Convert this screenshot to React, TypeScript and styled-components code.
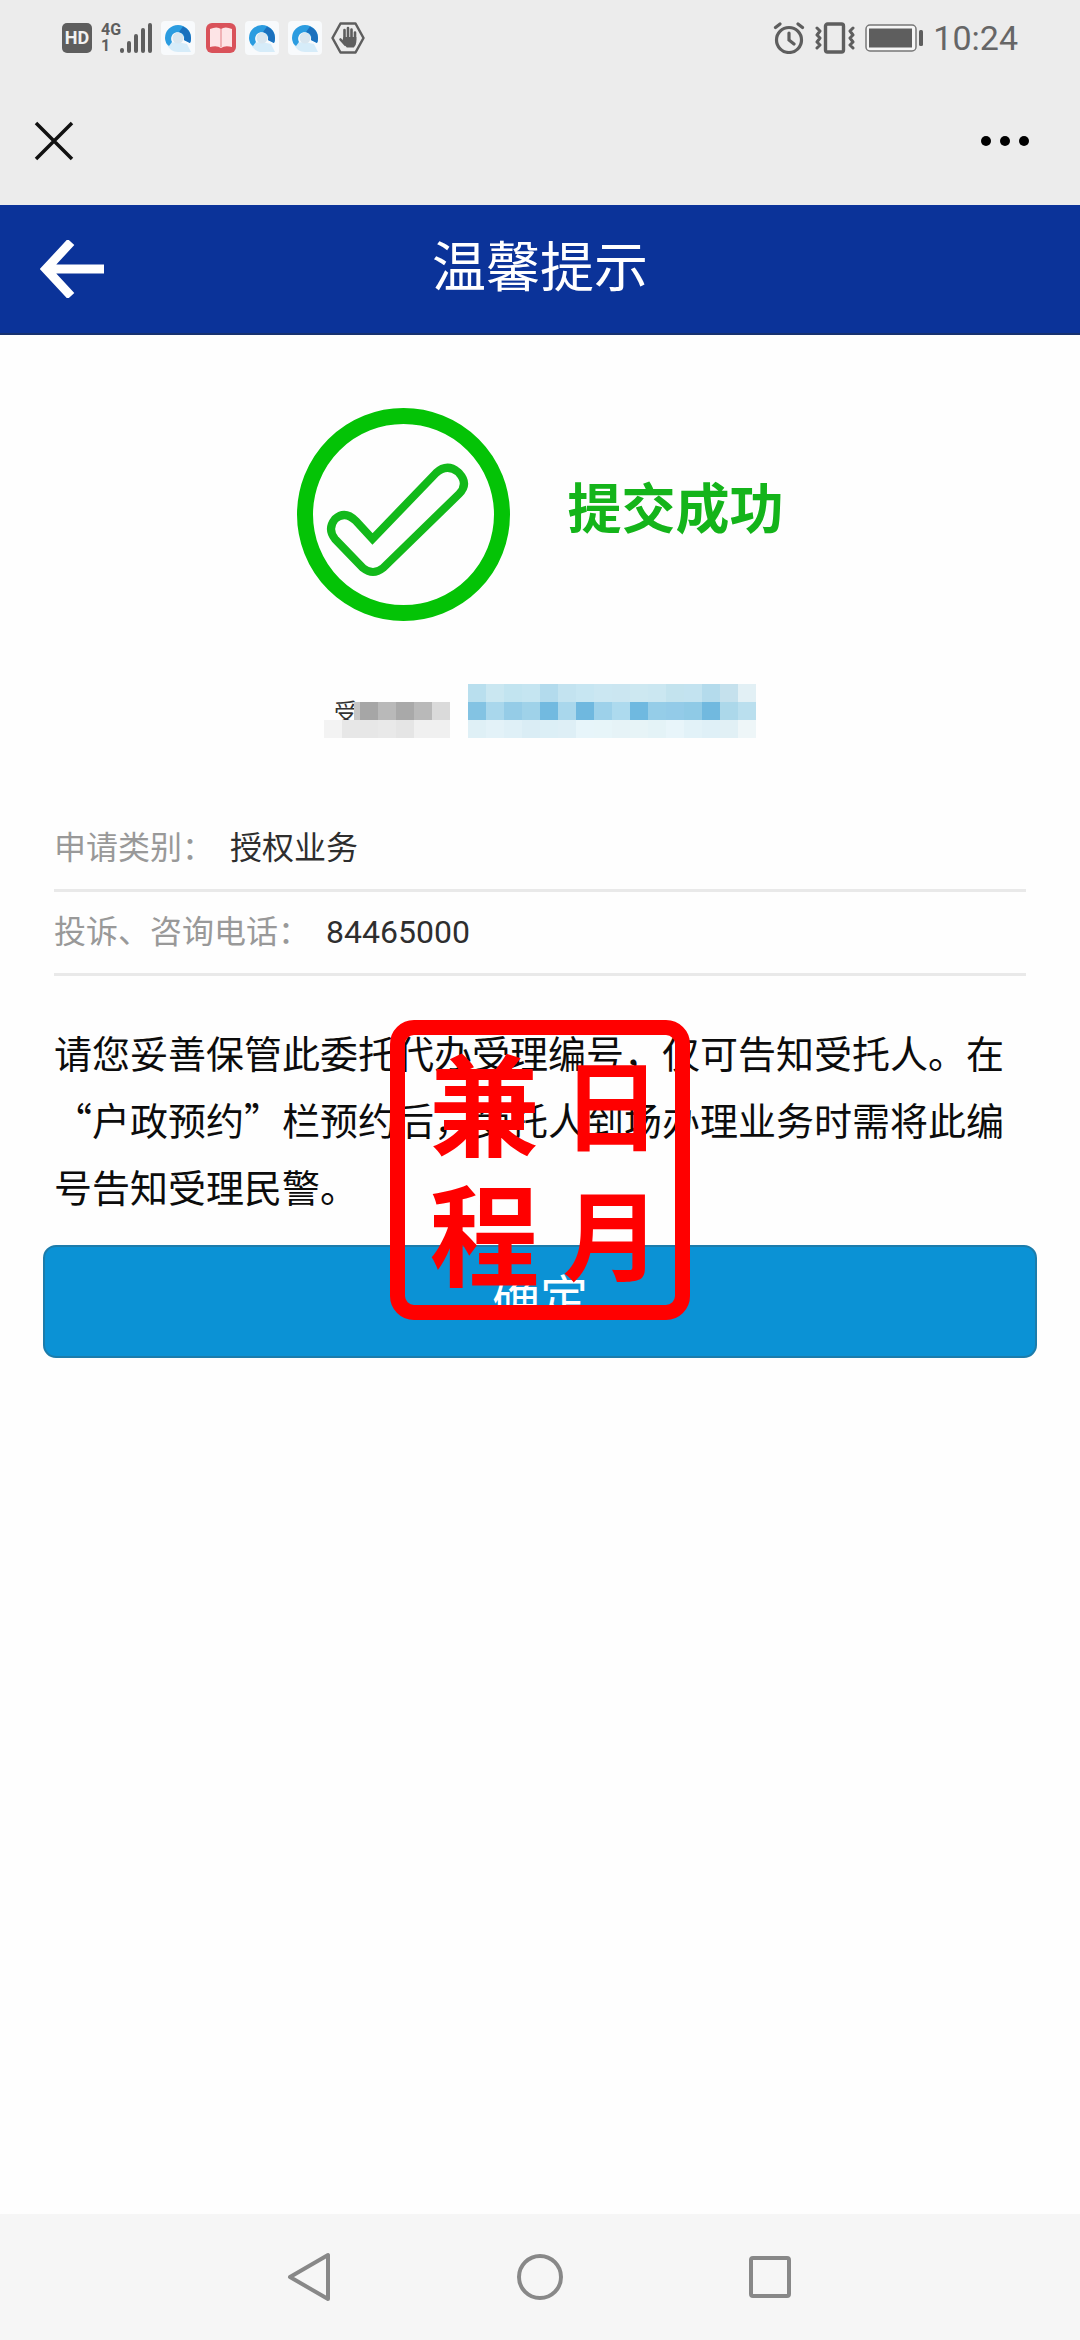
import React from "react";
import styled, { createGlobalStyle } from "styled-components";

const GlobalStyle = createGlobalStyle`
  * { box-sizing: border-box; }
  body {
    margin: 0;
    background: #fefefe;
    font-family: Roboto, "Noto Sans CJK SC", sans-serif;
    color: #333;
  }
  button { font: inherit; border: 0; padding: 0; background: none; cursor: pointer; }
  svg { display: block; flex: none; }
`;

const Screen = styled.div`
  display: flex;
  flex-direction: column;
  min-height: 100vh;
`;

const StatusBar = styled.header`
  display: flex;
  justify-content: space-between;
  align-items: center;
  height: 76px;
  padding: 0 62px;
  background: #ececec;
  color: #666;
`;

const StatusGroup = styled.div<{ $gap: number }>`
  display: flex;
  align-items: center;
  gap: ${(p) => p.$gap}px;
`;

const HdBadge = styled.span`
  width: 30px;
  height: 30px;
  border-radius: 5px;
  background: #5e5e5e;
  color: #f2f2f2;
  font: 700 18px/30px Roboto, sans-serif;
  text-align: center;
`;

const Network = styled.span`
  display: flex;
  align-items: flex-end;
`;

const NetworkLabel = styled.span`
  display: flex;
  flex-direction: column;
  width: 18px;
  font: 700 16px/16px Roboto, sans-serif;
  color: #5e5e5e;
`;

const Clock = styled.time`
  font-size: 34px;
  line-height: 40px;
`;

const BrowserBar = styled.div`
  display: flex;
  justify-content: space-between;
  align-items: center;
  height: 129px;
  padding: 0 46px 0 32px;
  background: #ececec;
`;

const IconButton = styled.button`
  display: grid;
  place-items: center;
`;

const TitleBar = styled.div`
  display: grid;
  grid-template-columns: 96px 1fr 96px;
  align-items: center;
  height: 130px;
  padding: 0 24px;
  background: #0b3399;
  border-bottom: 2px solid #17316f;
`;

const Title = styled.h1`
  margin: 0;
  font-size: 54px;
  line-height: 64px;
  font-weight: 400;
  text-align: center;
  color: #fff;
`;

const Main = styled.main`
  flex: 1;
  padding: 73px 43px 0;
`;

const Result = styled.section`
  display: flex;
  justify-content: center;
  align-items: center;
  gap: 58px;
`;

const ResultText = styled.h2`
  margin: 0;
  padding-bottom: 8px;
  font-size: 54px;
  line-height: 64px;
  font-weight: 700;
  color: #14b41a;
`;

const Receipt = styled.div`
  position: relative;
  width: 432px;
  margin: 63px auto 70px;
  padding: 11px 10px 7px;
  font-size: 24px;
  line-height: 36px;
`;

const Mask = styled.svg`
  position: absolute;
  inset: 0;
`;

const Details = styled.dl`
  margin: 0 11px 42px;
`;

const DetailRow = styled.div`
  display: flex;
  align-items: center;
  gap: 16px;
  height: 84px;
  padding-bottom: 2px;
  border-bottom: 3px solid #e9e9e9;
  font-size: 32px;
  line-height: 48px;

  dt { color: #999; }
  dd { margin: 0; color: #2e2e2e; }
`;

const Confirm = styled.section`
  position: relative;
`;

const Notice = styled.p`
  margin: 0 11px 26px;
  font-family: "Noto Sans CJK SC", sans-serif;
  font-size: 38px;
  line-height: 67px;
  color: #0c0c0c;
`;

const SubmitButton = styled.button`
  display: block;
  width: 100%;
  height: 113px;
  padding-bottom: 6px;
  border: 2px solid #1c7cab;
  border-radius: 13px;
  background: #0b92d5;
  font-size: 48px;
  line-height: 64px;
  color: #fff;
`;

const Stamp = styled.div`
  position: absolute;
  top: 2px;
  left: 50%;
  display: grid;
  grid-template-columns: 1fr 1fr;
  grid-template-rows: 1fr 1fr;
  place-items: center;
  width: 300px;
  height: 300px;
  margin-left: -150px;
  padding: 0 0 10px 16px;
  border: 15px solid #f00;
  border-radius: 24px;
  color: #f00;
  font-family: "Noto Sans CJK SC", sans-serif;
  font-weight: 700;
  pointer-events: none;
`;

const StampGlyph = styled.span<{ $size: number }>`
  font-size: ${(p) => p.$size}px;
  line-height: 112px;
`;

const NavBar = styled.nav`
  display: flex;
  justify-content: center;
  align-items: center;
  gap: 166px;
  height: 126px;
  background: #f6f6f6;
`;

const CELL = 18;
const MASK_ROWS: { x: number; row: number; fills: string[] }[] = [
  { x: 0, row: 2, fills: ["#f3f3f3", "#e7e7e7", "#e7e7e7", "#e9e9e9", "#e5e5e5", "#f0f0f0", "#f0f0f0"] },
  { x: 36, row: 1, fills: ["#a6a6a6", "#b9b9b9", "#a9a9a9", "#b9b9b9", "#dadada"] },
  {
    x: 144, row: 0,
    fills: ["#b9dfee", "#cae7f1", "#c2e4f0", "#c5e5f1", "#b3dbed", "#c3e3f0", "#c7e6f2", "#cbe7f2", "#cbe6f1", "#cde8f1", "#cbe7f1", "#c3e3ee", "#c3e3f0", "#b4dbec", "#c5e1ed", "#e2f0f5"],
  },
  {
    x: 144, row: 1,
    fills: ["#83c3e3", "#a9d7ec", "#95cce7", "#9fd2e9", "#72bae0", "#a9d7ec", "#6fb8df", "#9dd1ea", "#addaee", "#6fb9e0", "#95cde8", "#93cbe8", "#8fcae6", "#71b9df", "#acd8ea", "#badfee"],
  },
  {
    x: 144, row: 2,
    fills: ["#dff0f6", "#e3f2f8", "#dff0f7", "#daedf5", "#dceff6", "#deeff6", "#e7f5fa", "#e7f5f9", "#e6f3f7", "#e7f4f7", "#e4f3f7", "#e8f5fa", "#e2f2f8", "#dff0f7", "#e1f0f5", "#eef6f8"],
  },
];

const QBrowserIcon = () => (
  <svg width="34" height="34" viewBox="0 0 34 34" aria-hidden="true">
    <rect width="34" height="34" rx="4" fill="#f8fafc" />
    <path d="M5 22q4 9 12 9h13l-4-8-9-2z" fill="#d6ecf9" />
    <path d="M4 17A13 13 0 0 1 30 17q0 3-1 5l-6-3a6.500 6.500 0 1 0-12 2l-3 4q-4-3-4-8z" fill="#2b9ce0" />
    <path d="M22 5.500a13 13 0 0 1 8 11.500q0 3-1 5l-6-3q2-6-5-8z" fill="#1b70bd" />
    <circle cx="17" cy="17" r="5.500" fill="#d9e6ef" />
  </svg>
);

const BookIcon = () => (
  <svg width="32" height="30" viewBox="0 0 32 30" aria-hidden="true">
    <rect x="2" width="30" height="30" rx="6" fill="#d9525a" />
    <path d="M6 6q7-3 11 0 4-3 11 0v18q-7-2-11 1-4-3-11-1z" fill="#fde4e6" />
    <path d="M17 6v18" stroke="#eba0a5" strokeWidth="1.500" />
  </svg>
);

const SignalIcon = () => (
  <svg width="33" height="32" viewBox="0 0 33 32" fill="none" stroke="#5e5e5e" strokeWidth="4" strokeLinecap="round" aria-hidden="true">
    <path d="M3 29v-1M10 29v-8M17 29V14M24 29V8M31 29V3" />
  </svg>
);

const HandIcon = () => (
  <svg width="34" height="32" viewBox="0 0 34 32" aria-hidden="true">
    <path d="M9.500 1.500h15l8 14.500-8 14.500h-15L1.500 16z" fill="none" stroke="#5e5e5e" strokeWidth="2.500" strokeLinejoin="round" />
    <path d="M13.500 17V8M17 16V6M20.500 16V7.500M24 18v-7.500M9.500 17.500l4.500 5" stroke="#5e5e5e" strokeWidth="2.600" strokeLinecap="round" />
    <path d="M12.500 15h12.800v5q0 3-2.500 5.500h-7L11 20z" fill="#5e5e5e" />
  </svg>
);

const AlarmIcon = () => (
  <svg width="32" height="32" viewBox="0 0 32 32" fill="none" stroke="#5e5e5e" strokeWidth="3.200" strokeLinecap="round" aria-hidden="true">
    <circle cx="16" cy="18" r="12.500" />
    <path d="M16 11v7l5 4M2.500 5.500L7 2M29.500 5.500L25 2" />
  </svg>
);

const VibrateIcon = () => (
  <svg width="40" height="32" viewBox="0 0 40 32" fill="none" stroke="#5e5e5e" strokeWidth="3" strokeLinecap="round" strokeLinejoin="round" aria-hidden="true">
    <rect x="10.500" y="2" width="18" height="28" rx="2" strokeWidth="3.400" />
    <path d="M2 6l3 3-3 4 3 3-3 4 3 3-3 3M38 6l-3 3 3 4-3 3 3 4-3 3 3 3" />
  </svg>
);

const BatteryIcon = () => (
  <svg width="58" height="28" viewBox="0 0 58 28" aria-hidden="true">
    <rect x="1" y="1" width="50" height="26" rx="4" fill="#f6f6f6" stroke="#777" strokeWidth="1.500" />
    <rect x="4" y="4.500" width="43" height="19" fill="#5e5e5e" />
    <rect x="54" y="6" width="4" height="16" rx="1.500" fill="#5e5e5e" />
  </svg>
);

const SuccessIcon = () => (
  <svg width="213" height="213" viewBox="0 0 213 213" fill="none" aria-hidden="true">
    <circle cx="106.500" cy="106.500" r="98.500" stroke="#04c306" strokeWidth="16" />
    <path
      d="M75.500 131L139 65Q150 55 161 64L162 65Q172 76 162 86L86 160Q76 168 66 160L38 131Q30 121 38 111Q48 102 59 113Z"
      stroke="#12b91a"
      strokeWidth="8"
    />
  </svg>
);

export default function App() {
  return (
    <Screen>
      <GlobalStyle />
      <StatusBar>
        <StatusGroup $gap={9}>
          <HdBadge>HD</HdBadge>
          <Network>
            <NetworkLabel>
              <span>4G</span>
              <span>1</span>
            </NetworkLabel>
            <SignalIcon />
          </Network>
          <QBrowserIcon />
          <BookIcon />
          <QBrowserIcon />
          <QBrowserIcon />
          <HandIcon />
        </StatusGroup>
        <StatusGroup $gap={10}>
          <AlarmIcon />
          <VibrateIcon />
          <BatteryIcon />
          <Clock>10:24</Clock>
        </StatusGroup>
      </StatusBar>

      <BrowserBar>
        <IconButton type="button" aria-label="关闭">
          <svg width="44" height="44" viewBox="0 0 44 44" stroke="#111" strokeWidth="3.500">
            <path d="M4 4l36 36M40 4L4 40" />
          </svg>
        </IconButton>
        <IconButton type="button" aria-label="更多">
          <svg width="58" height="44" viewBox="0 0 58 44" fill="#000">
            <circle cx="10" cy="22" r="5" />
            <circle cx="29" cy="22" r="5" />
            <circle cx="48" cy="22" r="5" />
          </svg>
        </IconButton>
      </BrowserBar>

      <TitleBar>
        <IconButton type="button" aria-label="返回">
          <svg width="64" height="58" viewBox="0 0 64 58" fill="none" stroke="#fff" strokeWidth="9">
            <path d="M31 2L6 29l25 27M6 29h58" />
          </svg>
        </IconButton>
        <Title>温馨提示</Title>
      </TitleBar>

      <Main>
        <Result>
          <SuccessIcon />
          <ResultText>提交成功</ResultText>
        </Result>

        <Receipt>
          受
          <Mask width="432" height="54" viewBox="0 0 432 54" shapeRendering="crispEdges" aria-hidden="true">
            <rect x="30" y="18" width="6" height="18" fill="#c6c6c6" />
            {MASK_ROWS.map(({ x, row, fills }) =>
              fills.map((fill, i) => (
                <rect key={`${x}-${row}-${i}`} x={x + i * CELL} y={row * CELL} width={CELL} height={CELL} fill={fill} />
              ))
            )}
          </Mask>
        </Receipt>

        <Details>
          <DetailRow>
            <dt>申请类别：</dt>
            <dd>授权业务</dd>
          </DetailRow>
          <DetailRow>
            <dt>投诉、咨询电话：</dt>
            <dd>84465000</dd>
          </DetailRow>
        </Details>

        <Confirm>
          <Notice>
            请您妥善保管此委托代办受理编号，仅可告知受托人。在
            <wbr />
            “户政预约”栏预约后，受托人到场办理业务时需将此编号告知受理民警。
          </Notice>
          <SubmitButton type="button">确定</SubmitButton>
          <Stamp>
            <StampGlyph $size={110}>兼</StampGlyph>
            <StampGlyph $size={98}>日</StampGlyph>
            <StampGlyph $size={110}>程</StampGlyph>
            <StampGlyph $size={98}>月</StampGlyph>
          </Stamp>
        </Confirm>
      </Main>

      <NavBar>
        <IconButton type="button" aria-label="返回">
          <svg width="64" height="64" viewBox="0 0 64 64" fill="none" stroke="#888" strokeWidth="4" strokeLinejoin="round">
            <path d="M50 10v44L12 32z" />
          </svg>
        </IconButton>
        <IconButton type="button" aria-label="主页">
          <svg width="64" height="64" viewBox="0 0 64 64" fill="none" stroke="#888" strokeWidth="4">
            <circle cx="32" cy="32" r="21" />
          </svg>
        </IconButton>
        <IconButton type="button" aria-label="最近任务">
          <svg width="64" height="64" viewBox="0 0 64 64" fill="none" stroke="#888" strokeWidth="4">
            <rect x="13" y="13" width="38" height="38" rx="2" />
          </svg>
        </IconButton>
      </NavBar>
    </Screen>
  );
}
